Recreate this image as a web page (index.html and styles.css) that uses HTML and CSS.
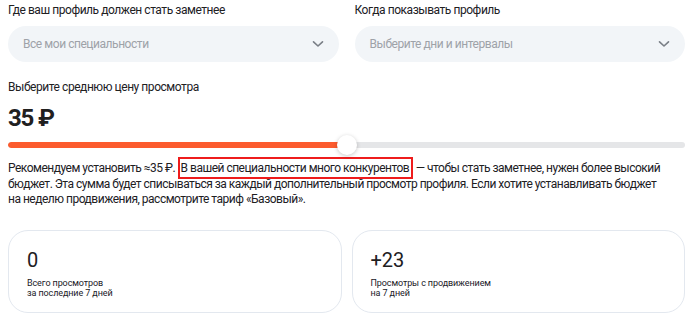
FILE: index.html
```html
<!DOCTYPE html>
<html lang="ru">
<head>
<meta charset="utf-8">
<link rel="stylesheet" href="styles.css">
</head>
<body>
<div class="page">
  <div class="fields">
    <div class="field">
      <div class="label">Где ваш профиль должен стать заметнее</div>
      <div class="select">
        <span class="placeholder">Все мои специальности</span>
        <svg class="chevron" width="12" height="8" viewBox="0 0 12 8"><path d="M1.5 1.8 L6 6 L10.5 1.8" fill="none" stroke="#7a7f86" stroke-width="1.6" stroke-linecap="round" stroke-linejoin="round"/></svg>
      </div>
    </div>
    <div class="field">
      <div class="label">Когда показывать профиль</div>
      <div class="select">
        <span class="placeholder">Выберите дни и интервалы</span>
        <svg class="chevron" width="12" height="8" viewBox="0 0 12 8"><path d="M1.5 1.8 L6 6 L10.5 1.8" fill="none" stroke="#7a7f86" stroke-width="1.6" stroke-linecap="round" stroke-linejoin="round"/></svg>
      </div>
    </div>
  </div>

  <div class="price">
    <div class="label">Выберите среднюю цену просмотра</div>
    <div class="amount">35 ₽</div>
    <div class="slider">
      <div class="track">
        <div class="fill" style="width: 50.1%"></div>
      </div>
      <div class="thumb" style="left: 50.1%"></div>
    </div>
    <p class="hint">Рекомендуем установить ≈35 ₽. <span class="mark">В вашей специальности много конкурентов</span> — чтобы стать заметнее, нужен более высокий бюджет. Эта сумма будет списываться за каждый дополнительный просмотр профиля. Если хотите устанавливать бюджет на неделю продвижения, рассмотрите тариф «Базовый».</p>
  </div>

  <div class="cards">
    <div class="card">
      <div class="num">0</div>
      <div class="cap">Всего просмотров<br>за последние 7 дней</div>
    </div>
    <div class="card">
      <div class="num">+23</div>
      <div class="cap">Просмотры с продвижением<br>на 7 дней</div>
    </div>
  </div>
</div>
</body>
</html>
```

FILE: styles.css
```css
* { box-sizing: border-box; }
html, body { margin: 0; padding: 0; background: #fff; }
body {
  font-family: Roboto, "Noto Sans", Arial, sans-serif;
  color: #21201f;
  font-size: 12px;
  letter-spacing: -0.45px;
}
.page {
  width: 700px;
  padding: 2px 15px 0 8px;
}
.fields {
  display: grid;
  grid-template-columns: 1fr 1fr;
  column-gap: 16px;
}
.label {
  font-size: 12px;
  line-height: 16px;
  margin-bottom: 8px;
}
.select {
  height: 36px;
  border-radius: 18px;
  background: #f2f5f8;
  display: flex;
  align-items: center;
  justify-content: space-between;
  padding: 0 15px 0 15px;
}
.placeholder {
  color: #9ea2a8;
  font-size: 12px;
}
.chevron { display: block; }
.price {
  margin-top: 17px;
}
.price .label { margin-bottom: 0; }
.amount {
  font-size: 24px;
  font-weight: 700;
  line-height: 30px;
  letter-spacing: -1.2px;
  margin-top: 8px;
}
.slider {
  position: relative;
  height: 22px;
  margin-top: 1px;
  display: flex;
  align-items: center;
}
.track {
  width: 100%;
  height: 6px;
  border-radius: 3px;
  background: #e5e6e8;
  overflow: hidden;
}
.fill {
  height: 100%;
  background: #fc5b2e;
  border-radius: 3px;
}
.thumb {
  position: absolute;
  top: 1px;
  width: 20px;
  height: 20px;
  margin-left: -10px;
  border-radius: 50%;
  background: #fff;
  box-shadow: 0 1px 4px rgba(0, 0, 0, 0.22);
}
.hint {
  margin: 5px 0 0;
  padding-right: 19px;
  font-size: 12px;
  line-height: 15.5px;
  letter-spacing: -0.5px;
}
.mark {
  border: 2px solid #ee1c1c;
  padding: 2px 2px 2px 1px;
}
.cards {
  display: grid;
  grid-template-columns: 1fr 1fr;
  column-gap: 10px;
  margin-top: 22px;
}
.card {
  height: 83px;
  border: 1px solid #e3e8ef;
  border-radius: 20px;
  padding: 17px 18px 0;
  letter-spacing: 0;
}
.num {
  font-size: 20px;
  line-height: 24px;
}
.cap {
  font-size: 9px;
  line-height: 10px;
  margin-top: 6px;
  letter-spacing: -0.1px;
}
```
